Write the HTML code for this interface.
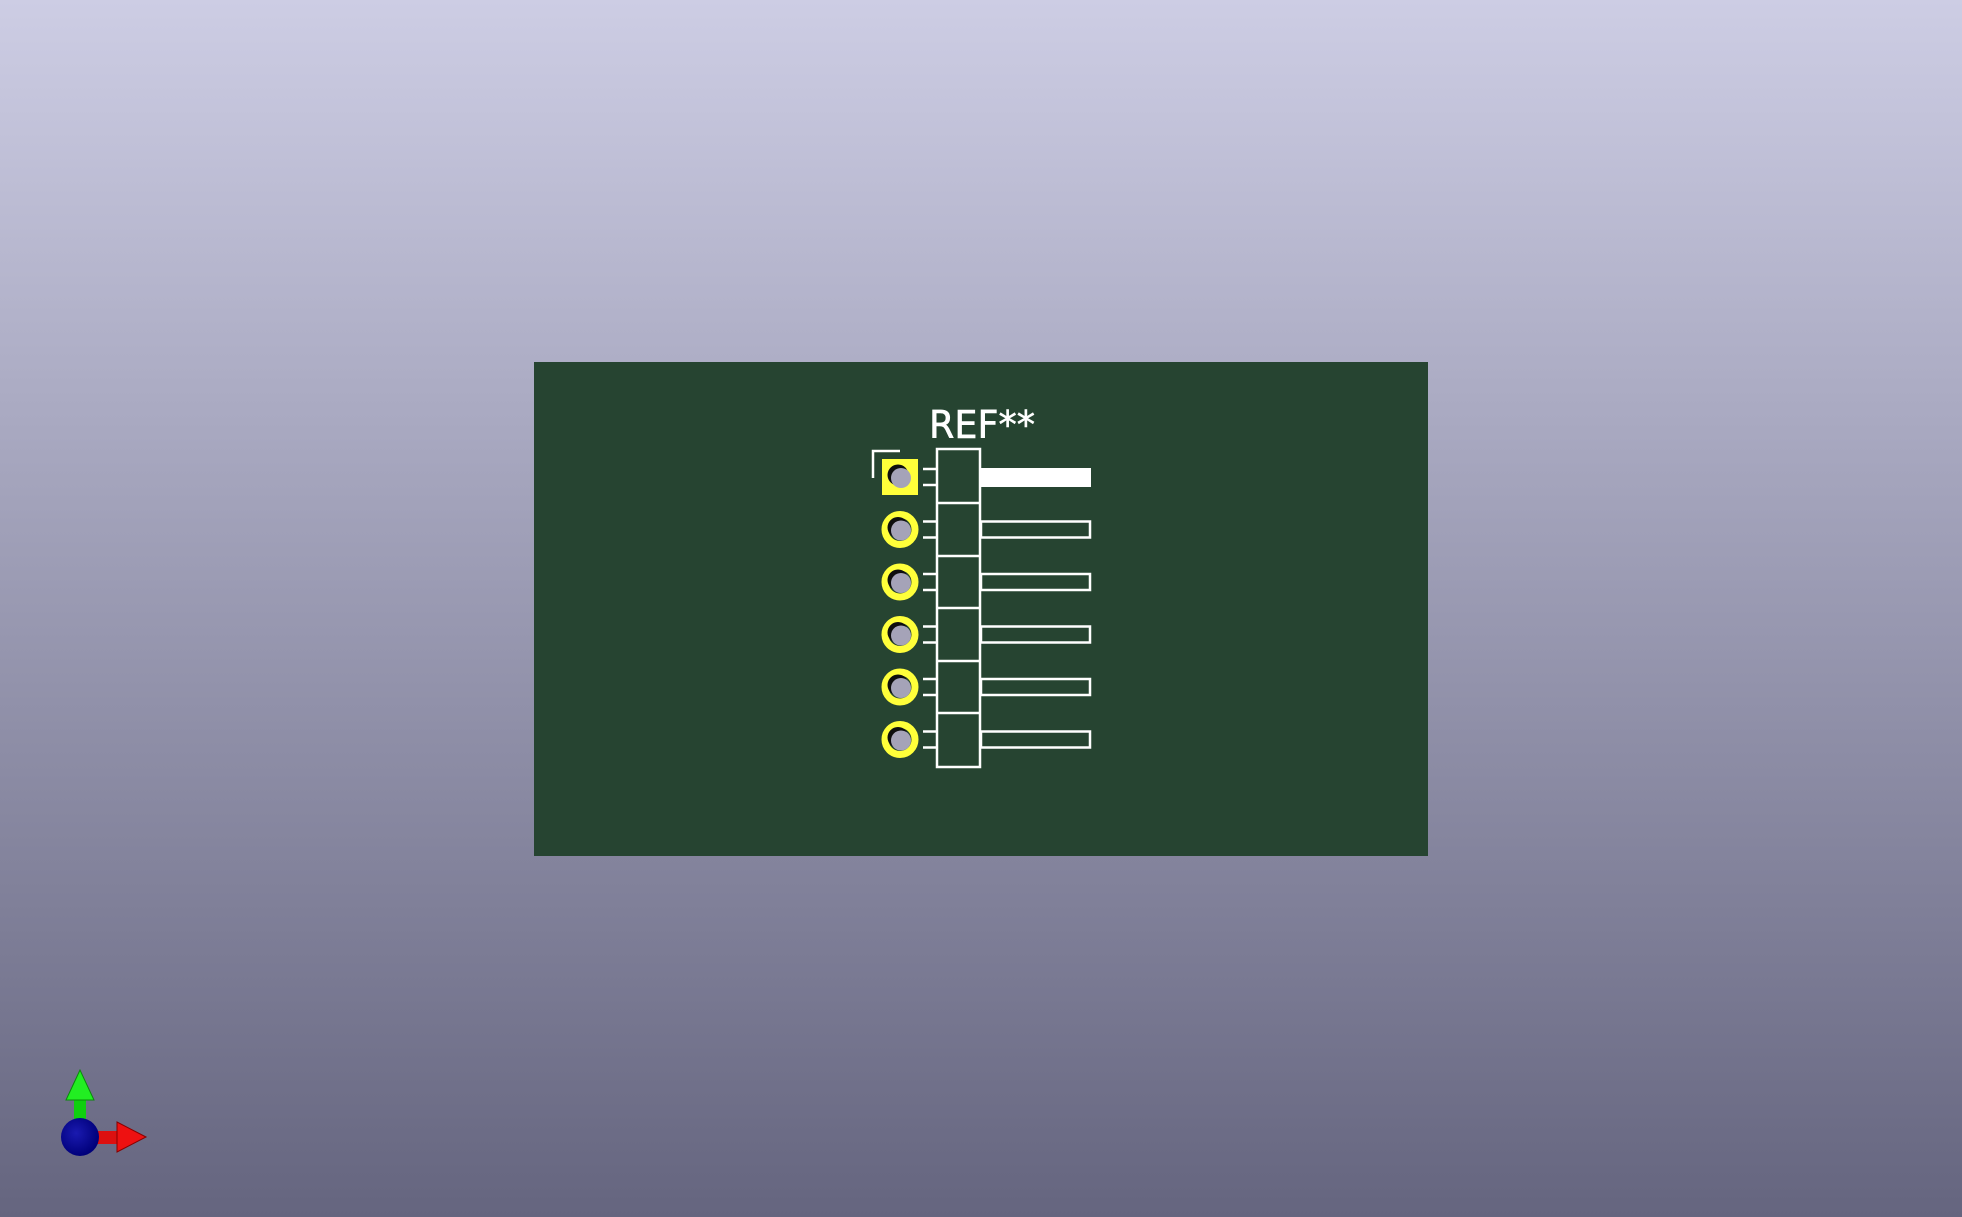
<!DOCTYPE html>
<html><head><meta charset="utf-8"><style>
html,body{margin:0;padding:0;width:1962px;height:1217px;overflow:hidden}
body{background:linear-gradient(#cdcde4,#65657f)}
svg{display:block}
</style></head><body>
<svg width="1962" height="1217" viewBox="0 0 1962 1217">
<defs>
<radialGradient id="b" cx="0.4" cy="0.4" r="0.6"><stop offset="0" stop-color="#1a1ab0"/><stop offset="1" stop-color="#00007a"/></radialGradient>
<g id="pin">
  <line x1="923" y1="-8" x2="937" y2="-8" stroke="#fff" stroke-width="2.5"/>
  <line x1="923" y1="8" x2="937" y2="8" stroke="#fff" stroke-width="2.5"/>
  <rect x="981" y="-8" width="109" height="16" fill="none" stroke="#fff" stroke-width="2.5"/>
  <circle cx="900" cy="0" r="15" fill="#26442f" stroke="#ffff3a" stroke-width="7"/>
  <circle cx="898" cy="-2" r="10.5" fill="#0e0e0e"/>
  <circle cx="901" cy="1" r="10" fill="#a5a3b8"/>
</g>
</defs>
<rect x="534" y="362" width="894" height="494" fill="#264431"/>
<text x="929" y="438" font-family="DejaVu Sans, sans-serif" font-size="38" fill="#fff" stroke="#fff" stroke-width="0.6" textLength="106" lengthAdjust="spacingAndGlyphs">REF**</text>
<polyline points="873,478 873,451 900,451" fill="none" stroke="#fff" stroke-width="2.5"/>
<rect x="937" y="449" width="43" height="318" fill="none" stroke="#fff" stroke-width="2.5"/>
<g stroke="#fff" stroke-width="2.5">
<line x1="937" y1="503" x2="980" y2="503"/><line x1="937" y1="556" x2="980" y2="556"/>
<line x1="937" y1="608" x2="980" y2="608"/><line x1="937" y1="661" x2="980" y2="661"/>
<line x1="937" y1="713" x2="980" y2="713"/>
<line x1="923" y1="469" x2="937" y2="469"/><line x1="923" y1="485" x2="937" y2="485"/>
</g>
<rect x="980" y="468" width="111" height="19" fill="#fff"/>
<rect x="882" y="459" width="36" height="36" fill="#ffff3a"/>
<circle cx="898" cy="475" r="10.5" fill="#0e0e0e"/>
<circle cx="901" cy="478" r="10" fill="#a5a3b8"/>
<use href="#pin" transform="translate(0,529.5)"/>
<use href="#pin" transform="translate(0,582)"/>
<use href="#pin" transform="translate(0,634.5)"/>
<use href="#pin" transform="translate(0,687)"/>
<use href="#pin" transform="translate(0,739.5)"/>
<rect x="74" y="1098" width="12" height="30" fill="#10d010"/>
<polygon points="80,1070 66,1100 94,1100" fill="#22ee22" stroke="#0a8a0a" stroke-width="1"/>
<rect x="92" y="1131" width="27" height="13" fill="#dd1010"/>
<polygon points="146,1137 117,1122 117,1152" fill="#ee1111" stroke="#800" stroke-width="1"/>
<circle cx="80" cy="1137" r="19" fill="url(#b)"/>
</svg>
</body></html>
